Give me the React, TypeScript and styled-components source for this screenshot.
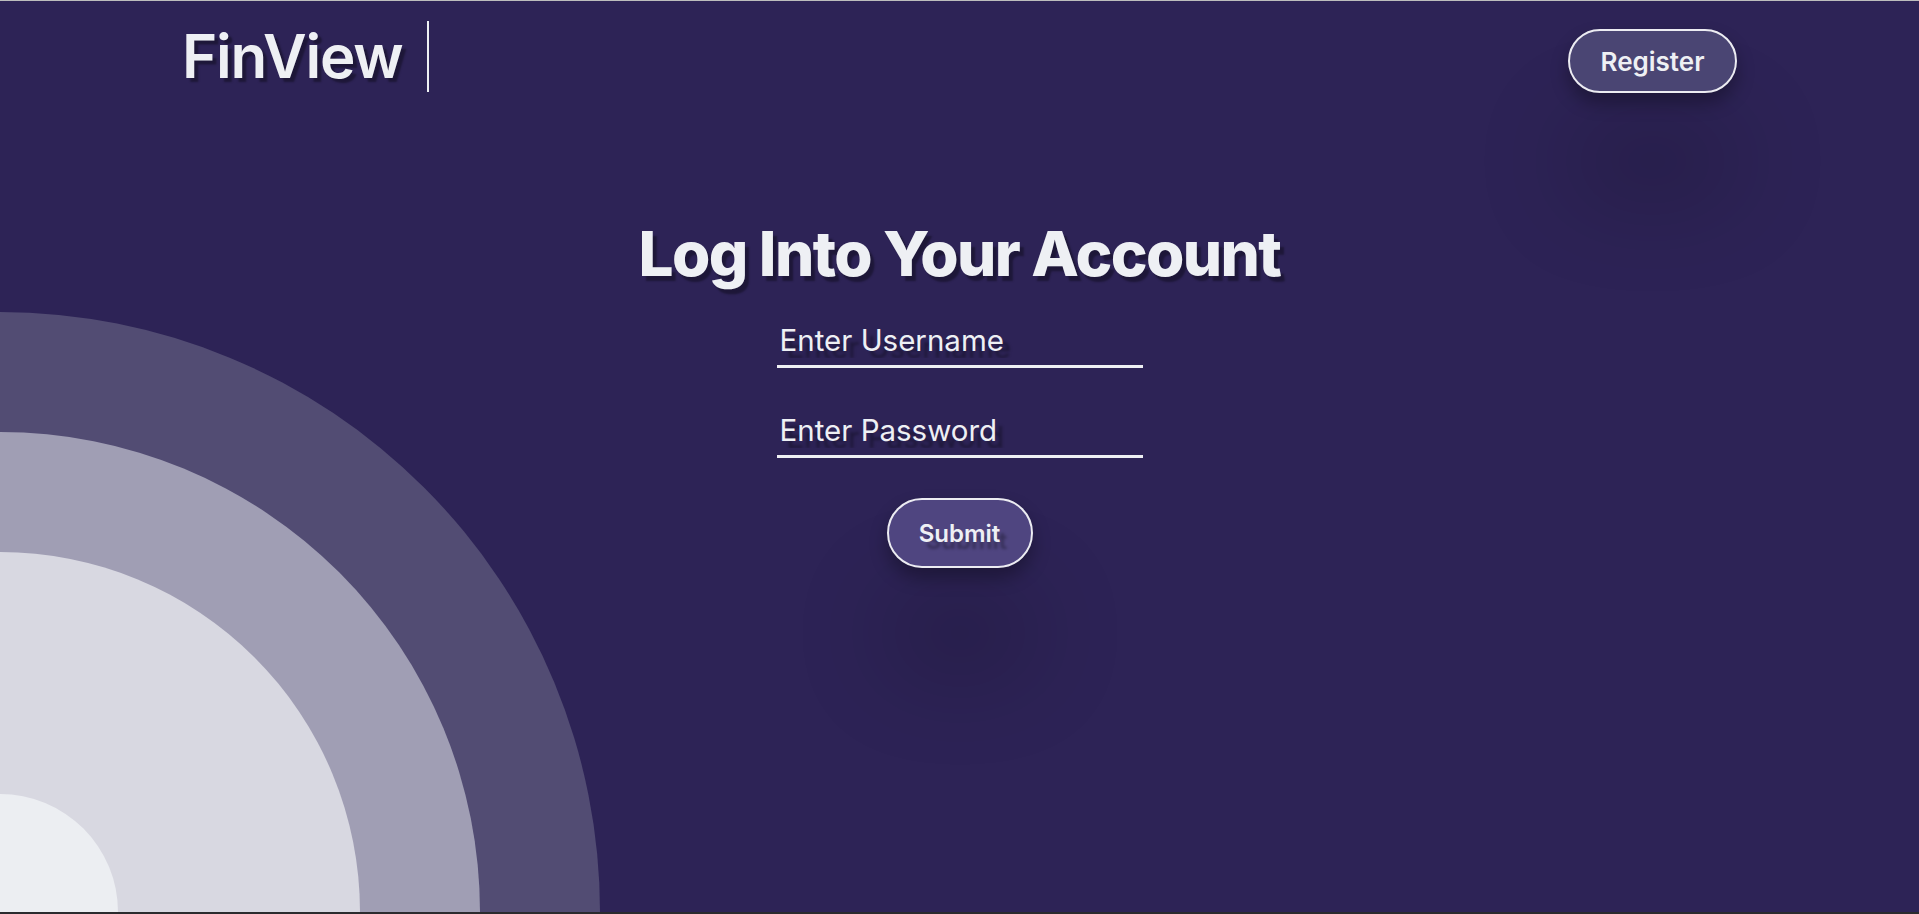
import React from "react";
import styled, { createGlobalStyle } from "styled-components";

const GlobalStyle = createGlobalStyle`
  html, body {
    margin: 0;
    padding: 0;
    background: #2d2356;
  }
  * { box-sizing: border-box; }
`;

const Page = styled.div`
  position: relative;
  height: 914px;
  overflow: hidden;
  background: #2d2356;
  border-top: 1px solid #bdbdbd;
  border-bottom: 2px solid #2b2b2e;
  font-family: Inter, "Noto Sans", sans-serif;
  color: #eef0f4;
`;

const Decor = styled.svg`
  position: absolute;
  left: 0;
  bottom: 0;
  width: 600px;
  height: 600px;
  display: block;
`;

const Content = styled.div`
  position: relative;
  z-index: 1;
`;

const Header = styled.header`
  padding: 20px 182px 0 182px;
  display: flex;
  justify-content: space-between;
  align-items: flex-start;
`;

const Logo = styled.div`
  font-size: 60px;
  font-weight: 600;
  line-height: 71px;
  letter-spacing: -1.2px;
  padding-right: 24px;
  border-right: 2px solid #eef0f4;
  text-shadow: 4px 4px 2px rgba(0, 0, 0, 0.35);
`;

const PillButton = styled.button<{ $tone: string; $w: number; $h: number; $size: number }>`
  width: ${(p) => p.$w}px;
  height: ${(p) => p.$h}px;
  padding: 0;
  border-radius: 999px;
  border: 2px solid #ececf2;
  background: ${(p) => p.$tone};
  color: #eef0f4;
  font-family: Inter, "Noto Sans", sans-serif;
  font-weight: 600;
  font-size: ${(p) => p.$size}px;
  cursor: pointer;
  box-shadow: 0 10px 18px rgba(0, 0, 0, 0.3), 0 100px 100px rgba(0, 0, 0, 0.22);
`;

const RegisterButton = styled(PillButton)`
  margin-top: 8px;
`;

const SubmitButton = styled(PillButton)`
  text-shadow: 7px 7px 3px rgba(0, 0, 0, 0.3);
`;

const Main = styled.main`
  display: flex;
  flex-direction: column;
  align-items: center;
  margin-top: 125px;
`;

const Title = styled.h1`
  margin: 0;
  font-size: 62px;
  line-height: 72px;
  font-weight: 800;
  letter-spacing: -1.6px;
  text-shadow: 4px 5px 2px rgba(0, 0, 0, 0.35);
`;

const Form = styled.form`
  display: flex;
  flex-direction: column;
  align-items: center;
  margin-top: 30px;
`;

const Field = styled.input`
  width: 366px;
  height: 48px;
  padding: 0 3px 6px;
  margin-bottom: 42px;
  background: transparent;
  border: none;
  border-bottom: 3px solid #eef0f4;
  outline: none;
  color: #eef0f4;
  font-family: Inter, "Noto Sans", sans-serif;
  font-size: 29.5px;
  &::placeholder {
    color: #eef0f4;
    opacity: 1;
    text-shadow: 7px 7px 3px rgba(0, 0, 0, 0.35);
  }
  &:last-of-type {
    margin-bottom: 40px;
  }
`;

export default function App() {
  return (
    <>
      <GlobalStyle />
      <Page>
        <Decor viewBox="0 0 600 600" aria-hidden="true">
          <circle cx="0" cy="600" r="600" fill="#524c73" />
          <circle cx="0" cy="600" r="480" fill="#a09eb4" />
          <circle cx="0" cy="600" r="360" fill="#d8d8e1" />
          <circle cx="0" cy="600" r="118" fill="#eceef2" />
        </Decor>
        <Content>
          <Header>
            <Logo>FinView</Logo>
            <RegisterButton $tone="#4a4573" $w={169} $h={64} $size={26}>
              Register
            </RegisterButton>
          </Header>
          <Main>
            <Title>Log Into Your Account</Title>
            <Form onSubmit={(e) => e.preventDefault()}>
              <Field type="text" placeholder="Enter Username" />
              <Field type="password" placeholder="Enter Password" />
              <SubmitButton type="submit" $tone="#4f4580" $w={146} $h={70} $size={24}>
                Submit
              </SubmitButton>
            </Form>
          </Main>
        </Content>
      </Page>
    </>
  );
}
